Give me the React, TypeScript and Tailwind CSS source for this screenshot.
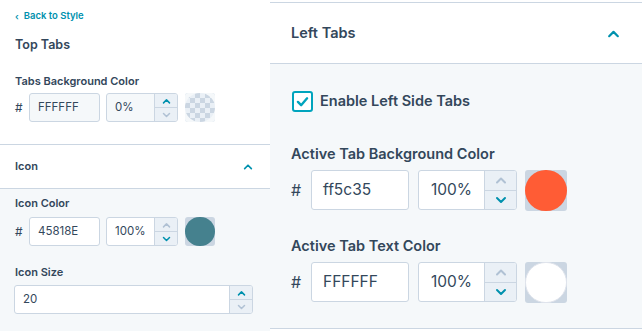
import React from 'react'

const font = { fontFamily: 'Inter, "Noto Sans", sans-serif' }

function Chevron({ dir, className }: { dir: 'up' | 'down'; className?: string }) {
  return (
    <svg viewBox="0 0 12 8" className={className} fill="none" stroke="currentColor" strokeWidth="2" strokeLinecap="round" strokeLinejoin="round">
      {dir === 'up' ? <path d="M2 6.5 6 2.5l4 4" /> : <path d="M2 2 6 6l4-4" />}
    </svg>
  )
}

function Stepper({ upActive, small }: { upActive: boolean; small?: boolean }) {
  const ic = small ? 'w-[9px] h-[6px]' : 'w-[12px] h-[8px]'
  return (
    <div className="flex flex-col h-full border-l border-[#cbd6e2] bg-[#eaf0f6]">
      <div className={`flex-1 flex items-center justify-center border-b border-[#cbd6e2] ${upActive ? 'text-[#0091ae]' : 'text-[#b0c1d4]'}`}>
        <Chevron dir="up" className={ic} />
      </div>
      <div className={`flex-1 flex items-center justify-center ${upActive ? 'text-[#b0c1d4]' : 'text-[#0091ae]'}`}>
        <Chevron dir="down" className={ic} />
      </div>
    </div>
  )
}

function Swatch({ color, big }: { color: string | null; big?: boolean }) {
  const size = big ? 'w-[42px] h-[41px]' : 'w-[30px] h-[29px]'
  return (
    <div className={`${size} rounded-[3px] bg-[#cbd6e2] relative overflow-hidden`}>
      {color ? (
        <div className={`absolute inset-0 rounded-full ${color === '#ffffff' ? 'border border-[#dfe3eb]' : ''}`} style={{ background: color }} />
      ) : (
        <svg className="absolute inset-0 w-full h-full" viewBox="0 0 30 29">
          <defs>
            <pattern id="chk" width="10" height="10" patternUnits="userSpaceOnUse">
              <rect width="10" height="10" fill="#eaf0f6" />
              <rect width="5" height="5" fill="#cbd6e2" />
              <rect x="5" y="5" width="5" height="5" fill="#cbd6e2" />
            </pattern>
          </defs>
          <rect width="30" height="29" fill="#f5f8fa" />
          <ellipse cx="15" cy="14.5" rx="15" ry="14.5" fill="url(#chk)" />
        </svg>
      )}
    </div>
  )
}

function SmallColorRow({ hex, pct, swatch, filled, upActive }: { hex: string; pct: string; swatch: string | null; filled: boolean; upActive: boolean }) {
  const bg = filled ? 'bg-[#f5f8fa]' : 'bg-white'
  return (
    <div className="flex items-center h-[29px]">
      <span className="w-[14px] text-[12px] text-[#33475b]">#</span>
      <div className={`w-[71px] h-[29px] rounded-[3px] border border-[#cbd6e2] ${bg} flex items-center pl-[8px] text-[11.5px] text-[#33475b]`}>{hex}</div>
      <div className={`ml-[6px] w-[72px] h-[29px] rounded-[3px] border border-[#cbd6e2] ${bg} flex overflow-hidden`}>
        <div className="flex-1 flex items-center pl-[8px] text-[11.5px] text-[#33475b]">{pct}</div>
        <div className="w-[23px]"><Stepper upActive={upActive} small /></div>
      </div>
      <div className="ml-[7px]"><Swatch color={swatch} /></div>
    </div>
  )
}

function BigColorRow({ hex, pct, swatch }: { hex: string; pct: string; swatch: string }) {
  return (
    <div className="flex items-center h-[40px]">
      <span className="w-[20px] text-[16px] text-[#33475b]">#</span>
      <div className="w-[98px] h-[40px] rounded-[3px] border border-[#cbd6e2] bg-white flex items-center pl-[11px] text-[15.5px] text-[#33475b]">{hex}</div>
      <div className="ml-[9px] w-[99px] h-[40px] rounded-[3px] border border-[#cbd6e2] bg-white flex overflow-hidden">
        <div className="flex-1 flex items-center pl-[12px] text-[15.5px] text-[#33475b]">{pct}</div>
        <div className="w-[32px]"><Stepper upActive={false} /></div>
      </div>
      <div className="ml-[8px]"><Swatch color={swatch} big /></div>
    </div>
  )
}

export default function App() {
  return (
    <div className="flex w-[642px] h-[331px] bg-white overflow-hidden text-[#33475b]" style={font}>
      <div className="w-[270px] flex flex-col">
        <div className="px-[15px]">
          <div className="h-[32px] flex items-center gap-[5px] text-[#0091ae] text-[9.5px] font-semibold pt-[1px]">
            <span className="text-[9px] leading-none">‹</span>
            <span>Back to Style</span>
          </div>
          <div className="h-[26px] flex items-center text-[12.5px] font-semibold">Top Tabs</div>
          <div className="h-[24px] mt-[11px] flex items-center text-[11px] font-semibold">Tabs Background Color</div>
          <SmallColorRow hex="FFFFFF" pct="0%" swatch={null} filled upActive />
        </div>
        <div className="mt-[22px] border-t border-b border-[#cbd6e2] h-[45px] flex items-center justify-between pl-[15px] pr-[17px]">
          <span className="text-[11px] font-semibold">Icon</span>
          <Chevron dir="up" className="w-[10px] h-[7px] text-[#0091ae]" />
        </div>
        <div className="flex-1 bg-[#f5f8fa] px-[15px]">
          <div className="h-[28px] pt-[1px] flex items-center text-[11px] font-semibold">Icon Color</div>
          <SmallColorRow hex="45818E" pct="100%" swatch="#45818e" filled={false} upActive={false} />
          <div className="h-[25px] mt-[14px] flex items-center text-[11px] font-semibold">Icon Size</div>
          <div className="w-[239px] h-[29px] rounded-[3px] border border-[#cbd6e2] bg-white flex overflow-hidden -ml-[1px]">
            <div className="flex-1 flex items-center pl-[8px] text-[11.5px]">20</div>
            <div className="w-[23px]"><Stepper upActive small /></div>
          </div>
        </div>
      </div>
      <div className="w-[372px] flex flex-col pt-[2px]">
        <div className="border-t border-b border-[#cbd6e2] h-[62px] flex items-center justify-between pl-[21px] pr-[22px]">
          <span className="text-[14.5px] font-semibold">Left Tabs</span>
          <Chevron dir="up" className="w-[13px] h-[9px] text-[#0091ae]" />
        </div>
        <div className="flex-1 bg-[#f5f8fa] pl-[21px] border-b border-[#cbd6e2] mb-[2px]">
          <div className="mt-[26px] h-[22px] flex items-center">
            <div className="w-[21px] h-[21px] ml-[1px] rounded-[3px] border-2 border-[#00a4bd] bg-white flex items-center justify-center">
              <svg viewBox="0 0 14 12" className="w-[13px] h-[11px]" fill="none" stroke="#00a4bd" strokeWidth="2.6" strokeLinecap="round" strokeLinejoin="round">
                <path d="M2 6.5 5.5 10 12 2.5" />
              </svg>
            </div>
            <span className="ml-[7px] text-[14.5px] font-semibold">Enable Left Side Tabs</span>
          </div>
          <div className="mt-[29px] h-[26px] flex items-center text-[14.5px] font-semibold">Active Tab Background Color</div>
          <div className="mt-[3px]"><BigColorRow hex="ff5c35" pct="100%" swatch="#ff5c35" /></div>
          <div className="mt-[23px] h-[26px] flex items-center text-[14.5px] font-semibold">Active Tab Text Color</div>
          <div className="mt-[3px]"><BigColorRow hex="FFFFFF" pct="100%" swatch="#ffffff" /></div>
        </div>
      </div>
    </div>
  )
}
